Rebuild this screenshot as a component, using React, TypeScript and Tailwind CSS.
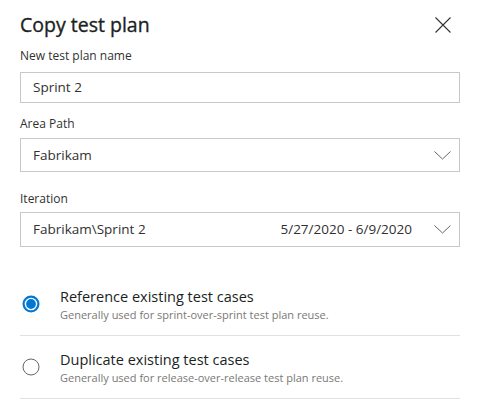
import { useState } from "react";

const font = { fontFamily: '"Open Sans", "Noto Sans", sans-serif' };

function Chevron() {
  return (
    <svg width="17" height="9" viewBox="0 0 17 9" className="text-[#666]">
      <path d="M0.5 0.5 L8.5 8 L16.5 0.5" fill="none" stroke="currentColor" strokeWidth="1" />
    </svg>
  );
}

function CloseIcon() {
  return (
    <svg width="16" height="16" viewBox="0 0 16 16" className="text-[#333]">
      <path d="M0.5 0.5 L15.5 15.5 M15.5 0.5 L0.5 15.5" stroke="currentColor" strokeWidth="1.1" />
    </svg>
  );
}

function Radio({ checked }: { checked: boolean }) {
  return (
    <svg width="18" height="18" viewBox="0 0 18 18">
      {checked ? (
        <>
          <circle cx="9" cy="9" r="8.5" fill="#0078d4" />
          <circle cx="9" cy="9" r="5.6" fill="#0078d4" stroke="#fff" strokeWidth="1.4" />
        </>
      ) : (
        <circle cx="9" cy="9" r="8" fill="#fff" stroke="#666" strokeWidth="1" />
      )}
    </svg>
  );
}

function Dropdown({ value, extra, tall }: { value: string; extra?: string; tall?: boolean }) {
  return (
    <div
      className={`flex items-center border border-[#c8c8c8] pl-3 pr-2 ${tall ? "h-[35px]" : "h-[34px]"}`}
    >
      <span className="text-[13.5px] text-[#323130] flex-1">{value}</span>
      {extra && <span className="text-[13.5px] text-[#323130] mr-[22px]">{extra}</span>}
      <Chevron />
    </div>
  );
}

const options = [
  {
    title: "Reference existing test cases",
    hint: "Generally used for sprint-over-sprint test plan reuse.",
  },
  {
    title: "Duplicate existing test cases",
    hint: "Generally used for release-over-release test plan reuse.",
  },
];

export default function App() {
  const [choice, setChoice] = useState(0);

  return (
    <div className="w-[480px] h-[415px] bg-white px-5 pt-[10px] overflow-hidden" style={font}>
      <div className="flex items-center justify-between h-[30px]">
        <h1 className="text-[19.5px] font-normal text-[#201f1e] [-webkit-text-stroke:0.35px_#201f1e]">
          Copy test plan
        </h1>
        <button className="mr-[9px]">
          <CloseIcon />
        </button>
      </div>

      <div className="mt-[7px] text-[12px] leading-[18px] text-[#323130]">New test plan name</div>
      <div className="mt-[7px] h-[31px] border border-[#c8c8c8] flex items-center px-3 text-[13.5px] text-[#323130]">
        Sprint 2
      </div>

      <div className="mt-[12px] text-[12px] leading-[18px] text-[#323130]">Area Path</div>
      <div className="mt-[5px]">
        <Dropdown value="Fabrikam" />
      </div>

      <div className="mt-[18px] text-[12px] leading-[18px] text-[#323130]">Iteration</div>
      <div className="mt-[4px]">
        <Dropdown value="Fabrikam\Sprint 2" extra="5/27/2020 - 6/9/2020" tall />
      </div>

      <div className="mt-[26px]">
        {options.map((opt, i) => (
          <div
            key={i}
            onClick={() => setChoice(i)}
            className="flex items-center border-b border-[#e1e1e1] h-[63px] cursor-pointer"
          >
            <div className="w-[40px] pl-[2px]">
              <Radio checked={choice === i} />
            </div>
            <div className="flex flex-col">
              <span className="text-[14.5px] leading-[20px] text-[#201f1e]">{opt.title}</span>
              <span className="text-[11px] leading-[15px] text-[#7a7876]">{opt.hint}</span>
            </div>
          </div>
        ))}
      </div>
    </div>
  );
}
